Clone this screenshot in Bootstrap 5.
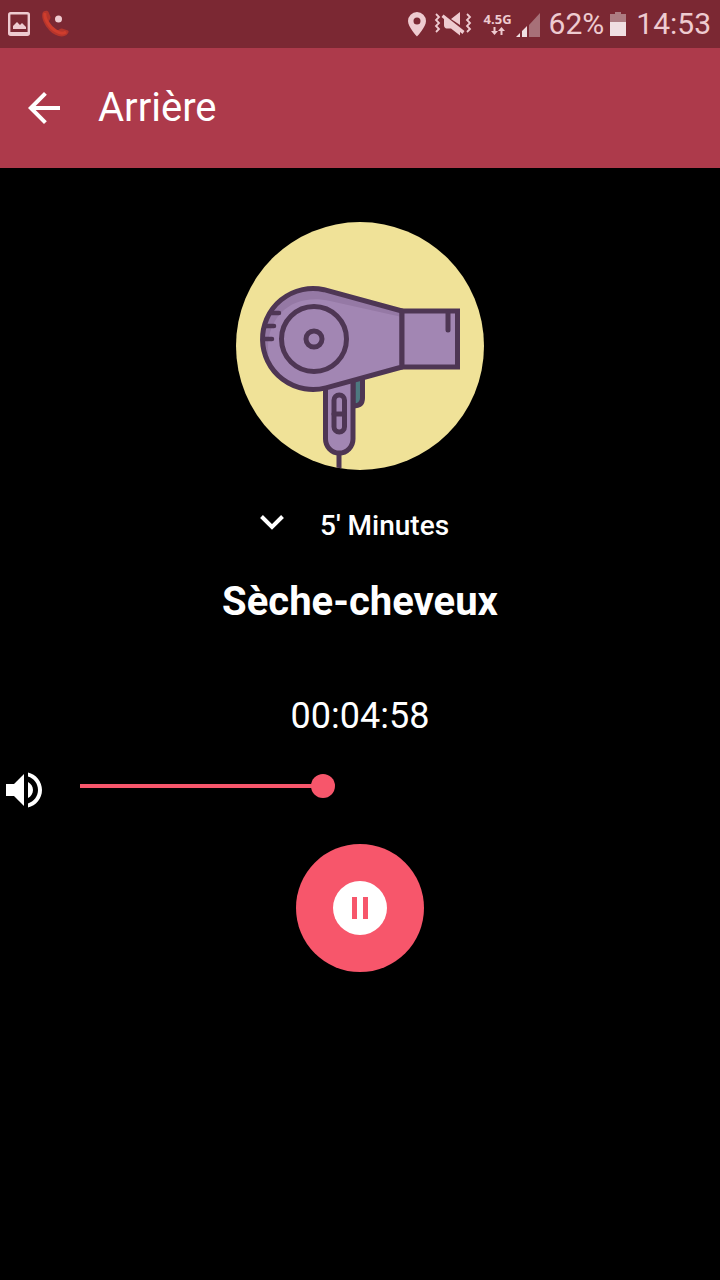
<!DOCTYPE html>
<html lang="fr">
<head>
<meta charset="utf-8">
<meta name="viewport" content="width=device-width, initial-scale=1">
<title>Sèche-cheveux</title>
<link href="https://cdn.jsdelivr.net/npm/bootstrap@5.3.0/dist/css/bootstrap.min.css" rel="stylesheet">
<style>
  :root { --accent: #f7566b; --bar: #ad3a4b; --status: #7b2833; --status-ink: #eecbd0; }
  body { background: #000; color: #fff; font-family: Roboto, "Liberation Sans", sans-serif; }
  svg { display: block; flex: none; }
  .status-bar { background: var(--status); color: var(--status-ink); height: 48px; padding: 0 9px 0 8px; font-size: 30px; line-height: 48px; }
  .network { font: 700 13px/14px "Open Sans", sans-serif; }
  .battery { gap: 6px; margin: 0 10px 0 8px; }
  .app-bar { background: var(--bar); height: 120px; padding: 0 28px; gap: 38px; }
  .app-title { font-size: 40px; line-height: 48px; }
  .player { padding-top: 54px; }
  .duration { margin-top: 36px; height: 40px; gap: 36px; padding-left: 8px; }
  .duration svg { margin-bottom: 6px; }
  .duration select { appearance: none; width: 148px; padding: 0; border: 0; background: #000; color: #fff; font-size: 28px; font-weight: 500; line-height: 40px; }
  .sound-name { margin: 32px 0 0; font-size: 40px; font-weight: 700; line-height: 48px; }
  .timer { margin-top: 70px; font-size: 36px; line-height: 40px; }
  .volume { margin-top: 34px; padding: 0 20px 0 0; gap: 20px; height: 40px; }
  .volume input { appearance: none; height: 24px; margin: 0 0 8px; background: transparent; }
  .volume input::-webkit-slider-runnable-track { height: 4px; background: linear-gradient(90deg, transparent 12px, var(--accent) 12px 40%, transparent 40%); }
  .volume input::-webkit-slider-thumb { appearance: none; width: 24px; height: 24px; margin-top: -10px; border-radius: 50%; background: var(--accent); }
  .pause-btn { width: 128px; height: 128px; margin-top: 34px; background: var(--accent); }
  .pause-btn:hover { background: var(--accent); }
</style>
</head>
<body>
<div class="status-bar d-flex align-items-center">
  <svg width="22" height="24" viewBox="0 0 22 24" aria-hidden="true"><rect x="1.200" y="1.200" width="19.600" height="21.600" rx="1.500" fill="none" stroke="#eecbd0" stroke-width="2.400"/><path d="M1 20h20v2H1z" fill="#eecbd0"/><path d="M5 17v-3l4-4 3 3 2-2 4 4v2z" fill="#eecbd0"/></svg>
  <svg class="ms-2 me-auto" width="34" height="30" viewBox="38 9 34 30" aria-hidden="true"><path d="M42.500 13c1-2.500 5-3 6-1l2 5c.5 2-2 3-1.500 5 1 4 4 7 8 8 2 .5 3-2 5-1.500l6 2c1.500 1 0 3-1.500 4.500-4 3-12 1-17-4.500s-8.500-12.500-7-17.500z" fill="#b5352c"/><path d="M45 13c-1 5 4 14 11 18 3 2 7 3 10 1" fill="none" stroke="#cf3d2d" stroke-width="3"/><circle cx="58.500" cy="19" r="3.500" fill="#eecbd0"/></svg>
  <svg width="18" height="25" viewBox="0 0 18 25" aria-hidden="true"><path fill-rule="evenodd" d="M9 0a9 9 0 0 0-9 9c0 6 9 15.500 9 15.500S18 15 18 9A9 9 0 0 0 9 0zm0 5.500a3.500 3.500 0 1 1 0 7 3.500 3.500 0 0 1 0-7z" fill="currentColor"/></svg>
  <svg class="ms-2" width="38" height="26" viewBox="434 11 38 26" aria-hidden="true"><g fill="none" stroke="#eecbd0" stroke-width="1.800"><path d="M436 14l3 3-3 3 3 3-3 3 3 3-3 3M467 14l3 3-3 3 3 3-3 3 3 3-3 3"/></g><path d="M441.500 17l2-2.500 21 16.500-2 3zM444 18l7 3 9 8v6.500l-9-7h-3.500c-3 0-3.500-2-3.500-4zM451 19l9-7v13z" fill="#eecbd0"/></svg>
  <div class="network ms-2 ps-1 text-center d-flex flex-column align-items-center">
    <span>4.5G</span>
    <svg width="14" height="10" viewBox="0 0 14 10" aria-hidden="true"><path d="M2.500 1h2v4H7L3.500 9 0 5h2.500zM9.500 9h2V5H14l-3.500-4L7 5h2.500z" fill="#eecbd0"/></svg>
  </div>
  <svg class="ms-1" width="25" height="25" viewBox="514 11 25 25" aria-hidden="true"><path d="M527 24l11-12v24h-11z" fill="#a77078"/><path d="M514 36l4-4v4zM520 30l5-5v11h-5z" fill="#f0dfe2"/></svg>
  <div class="battery d-flex align-items-center">
    <span>62%</span>
    <svg width="16" height="24" viewBox="0 0 16 24" aria-hidden="true"><path d="M0 2h5V0h6v2h5v8H0z" fill="#ad7c82"/><path d="M0 10h16v14H0z" fill="#f0dfe2"/></svg>
  </div>
  <time>14:53</time>
</div>
<header class="app-bar d-flex align-items-center">
  <button class="btn p-0 border-0" type="button" aria-label="Retour"><svg width="32" height="32" viewBox="4 4 16 16" fill="#fff"><path d="M20 11H7.830l5.590-5.590L12 4l-8 8 8 8 1.410-1.410L7.830 13H20z"/></svg></button>
  <span class="app-title">Arrière</span>
</header>
<main class="player d-flex flex-column align-items-center">
  <svg width="248" height="248" viewBox="236 222 248 248" role="img" aria-label="Sèche-cheveux">
    <defs>
      <clipPath id="disc"><circle cx="360" cy="346" r="124"/></clipPath>
      <clipPath id="shell"><path d="M324 289.700l78 21.300v56l-76 20.800a50.500 50.500 0 1 1-2-98.100z"/></clipPath>
    </defs>
    <circle cx="360" cy="346" r="124" fill="#f0e298"/>
    <g clip-path="url(#disc)" stroke="#4e3654" stroke-width="5" stroke-linejoin="round" stroke-linecap="round">
      <path d="M339 454v20" fill="none"/>
      <path d="M353 378h9.500v20q0 8-9.500 8z" fill="#4d7980"/>
      <path d="M325.500 382v57a13.700 14 0 0 0 27.500 0v-61z" fill="#a286b3"/>
      <rect x="334" y="395" width="10.500" height="37" rx="5.200" fill="#a286b3"/>
      <path d="M334 414h10" fill="none"/>
      <g clip-path="url(#shell)"><path d="M255 280h150v115H255z" fill="#9579a5" stroke="none"/><path d="M402 317l-72-16c-36-8-61 13-62 46 0 18 5 30 12 48h122z" fill="#a286b3" stroke="none"/></g>
      <path d="M324 289.700l78 21.300v56l-76 20.800a50.500 50.500 0 1 1-2-98.100z" fill="none"/>
      <rect x="402" y="311" width="55.500" height="56" fill="#a286b3" stroke-linejoin="miter"/>
      <path d="M448 312v18" fill="none"/>
      <circle cx="314" cy="339" r="32.500" fill="#a286b3"/>
      <circle cx="314" cy="339" r="8" fill="#a286b3"/>
      <path d="M270 313h9M266 326h8M265 339h7" fill="none" stroke-width="4.500"/>
    </g>
  </svg>
  <div class="duration d-flex align-items-center">
    <svg width="24" height="16" viewBox="0 0 24 16" aria-hidden="true"><path d="M1.500 1.500L12 12 22.500 1.500" fill="none" stroke="#fff" stroke-width="4"/></svg>
    <select aria-label="Durée"><option>5' Minutes</option></select>
  </div>
  <h1 class="sound-name">Sèche-cheveux</h1>
  <div class="timer" role="timer">00:04:58</div>
  <div class="volume w-100 d-flex align-items-center">
    <label for="volume" aria-label="Volume"><svg width="48" height="48" viewBox="0 0 24 24" fill="#fff"><path d="M3 9v6h4l5 5V4L7 9H3zm13.500 3c0-1.770-1.020-3.290-2.500-4.030v8.050c1.480-.730 2.500-2.250 2.500-4.020zM14 3.230v2.060c2.890.860 5 3.540 5 6.710s-2.110 5.850-5 6.710v2.060c4.010-.910 7-4.490 7-8.770s-2.990-7.860-7-8.770z"/></svg></label>
    <input class="flex-grow-1" id="volume" type="range" min="0" max="100" value="40">
  </div>
  <button class="pause-btn btn rounded-circle border-0 p-0 d-flex align-items-center justify-content-center" type="button" aria-label="Pause">
    <svg width="54" height="54" viewBox="0 0 54 54"><circle cx="27" cy="27" r="27" fill="#fff"/><path d="M19 16h5v22h-5zM30 16h5v22h-5z" fill="#f7566b"/></svg>
  </button>
</main>
<script src="https://cdn.jsdelivr.net/npm/bootstrap@5.3.0/dist/js/bootstrap.bundle.min.js"></script>
</body>
</html>
